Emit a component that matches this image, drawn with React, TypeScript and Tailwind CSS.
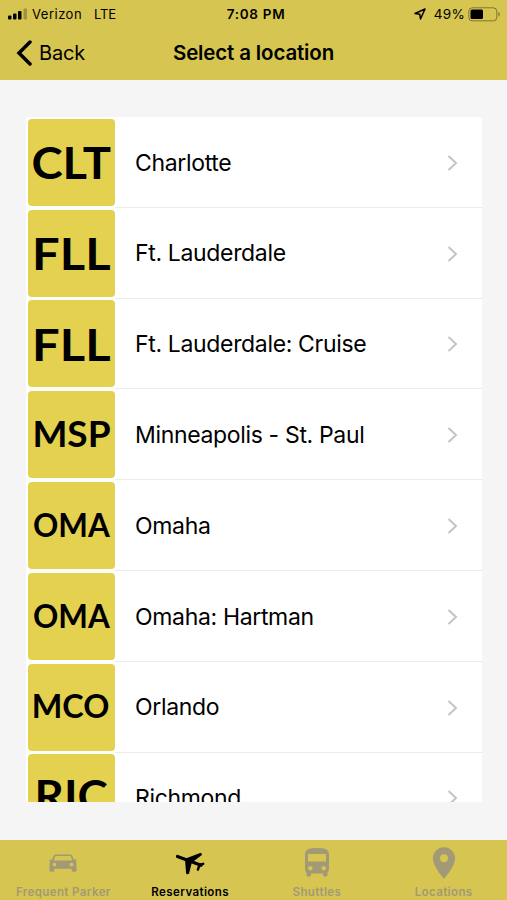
import { MdDirectionsBus, MdLocationOn } from "react-icons/md";

const locations = [
  { code: "CLT", name: "Charlotte", codeClass: "text-[44px] scale-x-[1.07]" },
  { code: "FLL", name: "Ft. Lauderdale", codeClass: "text-[44px] scale-x-[1.11]" },
  { code: "FLL", name: "Ft. Lauderdale: Cruise", codeClass: "text-[44px] scale-x-[1.11]" },
  { code: "MSP", name: "Minneapolis - St. Paul", codeClass: "text-[37px] -mt-[5px]" },
  { code: "OMA", name: "Omaha", codeClass: "text-[33px] scale-x-[0.95] -mt-[2px] -ml-[1px]" },
  { code: "OMA", name: "Omaha: Hartman", codeClass: "text-[33px] scale-x-[0.95] -mt-[2px] -ml-[1px]" },
  { code: "MCO", name: "Orlando", codeClass: "text-[33px] scale-x-[0.98] -mt-[3px] -ml-[1px]" },
  { code: "RIC", name: "Richmond", codeClass: "text-[44px] scale-x-[1.04] -mt-[6px]" },
];

const CarIcon = () => (
  <svg width="28" height="18" viewBox="0 0 28 18" fill="currentColor">
    <path
      fillRule="evenodd"
      d="M7 .5h14c1.3 0 2 .6 2.5 1.8l1.4 3.5 2.1-.2c.8 0 1 .9.5 1.4l-.9.7c.6.8.9 1.7.9 2.8v6c0 .8-.5 1.200-1.200 1.200h-2.400c-.8 0-1.200-.5-1.200-1.200v-1.700H5.300v1.700c0 .8-.5 1.200-1.200 1.200H1.700c-.8 0-1.200-.5-1.200-1.200v-6c0-1.100.3-2 .9-2.800l-.9-.7C0 6.500.2 5.600 1 5.600l2.100.2 1.400-3.500C5 1.100 5.700.5 7 .5zM7.300 1.900c-.7 0-1 .3-1.300 1L4.800 6.500h18.400L22 2.900c-.3-.7-.6-1-1.300-1zM5.500 8.700a1.900 1.900 0 1 0 0 3.800 1.900 1.900 0 0 0 0-3.800zm17 0a1.900 1.900 0 1 0 0 3.800 1.900 1.900 0 0 0 0-3.800z"
    />
  </svg>
);

const PlaneIcon = () => (
  <svg width="30" height="23" viewBox="0 0 30 23" fill="none" stroke="currentColor" strokeLinecap="round" strokeLinejoin="round">
    <path d="M2.500 4.500 26 13.300" strokeWidth="3.200" />
    <path d="M11 7.500 25.500 1.800l.5.800-10 7.400-2.800 11-1.200.2z" fill="currentColor" strokeWidth="1.900" />
    <path d="M28.200 11.800l-3.700 1.200-1.600 4.600" strokeWidth="2.400" />
  </svg>
);

const tabs = [
  { label: "Frequent Parker", icon: <CarIcon /> },
  { label: "Reservations", icon: <PlaneIcon />, active: true },
  { label: "Shuttles", icon: <MdDirectionsBus size={36} /> },
  { label: "Locations", icon: <MdLocationOn size={38} /> },
];

const StatusBar = () => (
  <div className="grid h-7 grid-cols-3 items-center pl-2 pr-[6px] text-[13px] leading-none">
    <div className="flex items-center">
      <svg width="20" height="12" viewBox="0 0 20 12">
        <rect x="0" y="7.500" width="3.500" height="4" rx="1" />
        <rect x="5" y="5.500" width="3.500" height="6" rx="1" />
        <rect x="10" y="3" width="3.500" height="8.500" rx="1" />
        <rect x="15.500" y="0.500" width="3.500" height="11" rx="1" opacity=".25" />
      </svg>
      <span className="ml-1 tracking-[0.5px]">Verizon</span>
      <span className="ml-3 tracking-[-0.2px]">LTE</span>
    </div>
    <div className="pl-[3px] pt-[1px] text-center text-[13.500px] font-semibold tracking-[0.7px]">7:08 PM</div>
    <div className="flex items-center justify-end">
      <svg width="12" height="12" viewBox="0 0 12 12" fill="none" stroke="#000" strokeWidth="1.500" strokeLinejoin="round">
        <path d="M11 1 1 5.500l4.800.7.700 4.800z" />
      </svg>
      <span className="ml-2 pt-[1px] text-[13.500px] tracking-[0.3px]">49%</span>
      <svg className="ml-[3px]" width="33" height="15" viewBox="0 0 33 15">
        <rect x=".8" y=".8" width="28" height="13" rx="3.500" fill="none" stroke="#000" strokeOpacity=".4" />
        <rect x="2.500" y="2.500" width="12.500" height="9.600" rx="1.500" />
        <path d="M30.500 5v4.500c1.500-.6 1.500-3.900 0-4.500z" opacity=".5" />
      </svg>
    </div>
  </div>
);

const App: React.FC = () => {
  return (
    <div className="flex h-[900px] w-[507px] flex-col overflow-hidden bg-[#f5f5f5] font-['Inter',sans-serif] text-black">
      <header className="h-[79.500px] shrink-0 bg-[#d6c550]">
        <StatusBar />
        <div className="grid h-[49px] grid-cols-[1fr_auto_1fr] items-center">
          <button className="flex items-center pl-4 text-[20px]">
            <svg width="17" height="26" viewBox="0 0 17 26" fill="none" stroke="#000" strokeWidth="3.500" strokeLinecap="round">
              <path d="M14 2 3 13l11 11" />
            </svg>
            <span className="ml-[6px] tracking-[-0.2px]">Back</span>
          </button>
          <h1 className="pt-[2px] text-[20.500px] font-semibold tracking-[-0.150px]">Select a location</h1>
        </div>
      </header>

      <main className="flex-1 overflow-hidden pl-[26px] pr-[25px] pt-[37.500px]">
        <ul className="h-[685px] overflow-hidden rounded-t-[3px] bg-white">
          {locations.map((location) => (
            <li key={location.name} className="flex h-[90.800px] items-center pl-[2px]">
              <div className="flex h-[87px] w-[87px] shrink-0 items-center justify-center rounded-[4px] bg-[#e5d150]">
                <span className={`font-['Lato',sans-serif] font-bold leading-none ${location.codeClass}`}>{location.code}</span>
              </div>
              <div className="flex h-full flex-1 items-center justify-between border-b border-[#ebebeb] pl-5 pr-6 pt-[2px]">
                <span className="text-[23px] tracking-[-0.340px]">{location.name}</span>
                <svg width="11" height="16" viewBox="0 0 11 16" fill="none" stroke="#c4c4c6" strokeWidth="2">
                  <path d="M1.500 1 9 8l-7.500 7" />
                </svg>
              </div>
            </li>
          ))}
        </ul>
      </main>

      <nav className="grid h-[60px] shrink-0 grid-cols-4 bg-[#d6c550]">
        {tabs.map((tab) => (
          <div key={tab.label} className={`flex flex-col items-center ${tab.active ? "text-black" : "text-[#a29a76]"}`}>
            <div className="flex h-[46px] items-center">{tab.icon}</div>
            <span className="whitespace-nowrap text-[11.500px] font-semibold leading-[12px] tracking-[0.400px]">{tab.label}</span>
          </div>
        ))}
      </nav>
    </div>
  );
};

export default App;
